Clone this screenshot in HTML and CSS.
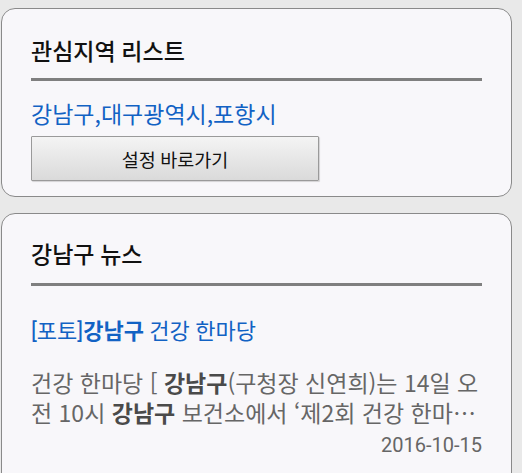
FILE: index.html
```html
<!DOCTYPE html>
<html lang="ko">
<head>
<meta charset="utf-8">
<link rel="stylesheet" href="styles.css">
</head>
<body>
<div class="page">
  <section class="card card-list">
    <h2 class="card-title">관심지역 리스트</h2>
    <div class="divider"></div>
    <p class="regions">강남구,대구광역시,포항시</p>
    <button class="btn">설정 바로가기</button>
  </section>
  <section class="card card-news">
    <h2 class="card-title">강남구 뉴스</h2>
    <div class="divider"></div>
    <a class="news-link" href="#">[포토]<b>강남구</b> 건강 한마당</a>
    <p class="news-body">건강 한마당 [ <b>강남구</b>(구청장 신연희)는 14일 오전 10시 <b>강남구</b> 보건소에서 ‘제2회 건강 한마당’ 행사를 개최했다.</p>
    <div class="news-date">2016-10-15</div>
  </section>
</div>
</body>
</html>
```
FILE: styles.css
```css
html, body {
  margin: 0;
  padding: 0;
  background: #e9e9e9;
  font-family: Roboto, "Noto Sans CJK KR", sans-serif;
  overflow: hidden;
}
.page {
  padding: 8px 10px 0 1px;
  display: flex;
  flex-direction: column;
  gap: 16px;
}
.card {
  border: 1px solid #8a8a8a;
  border-radius: 14px;
  background: #f8f7fa;
  padding: 27px 29px 15px 29px;
  display: flex;
  flex-direction: column;
  align-items: stretch;
}
.card-list {
  padding-top: 29px;
}
.card-list .divider {
  margin-top: 10px;
}
.card-title {
  margin: 0;
  font-size: 23px;
  font-weight: 500;
  line-height: 30px;
  color: #111;
}
.divider {
  height: 3px;
  background: #7f7f7f;
  margin-top: 12px;
}
.regions {
  margin: 17px 0 0 0;
  font-family: "Noto Sans CJK KR", sans-serif;
  font-size: 23px;
  line-height: 30px;
  color: #1262c4;
}
.btn {
  margin-top: 8px;
  align-self: flex-start;
  width: 288px;
  height: 45px;
  border: 1px solid #9a9a9a;
  border-radius: 1px;
  background: linear-gradient(#f4f4f4, #dadada);
  font-family: inherit;
  font-size: 18.5px;
  color: #111;
  padding: 0;
  box-shadow: 1px 1px 1px rgba(0,0,0,0.15);
}
.card-news {
  padding-bottom: 40px;
}
.news-link {
  margin-top: 31px;
  font-size: 22px;
  line-height: 30px;
  color: #1262c4;
  text-decoration: none;
}
.news-link b {
  font-weight: 700;
}
.news-body {
  margin: 20px 0 0 0;
  font-family: "Noto Sans CJK KR", sans-serif;
  font-size: 23px;
  line-height: 30px;
  color: #666;
  display: -webkit-box;
  -webkit-line-clamp: 2;
  -webkit-box-orient: vertical;
  overflow: hidden;
}
.news-body b {
  color: #4a4a4a;
  font-weight: 700;
}
.news-date {
  margin-top: 3px;
  text-align: right;
  font-size: 20px;
  line-height: 30px;
  color: #666;
}
```
